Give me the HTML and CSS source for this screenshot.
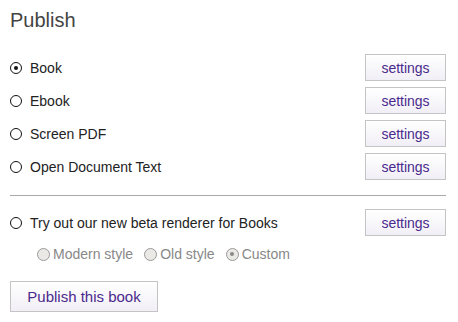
FILE: index.html
```html
<!DOCTYPE html>
<html>
<head>
<meta charset="utf-8">
<link rel="stylesheet" href="styles.css">
</head>
<body>
<div class="panel">
  <h1 class="title">Publish</h1>
  <div class="options">
    <div class="row">
      <label class="opt"><span class="radio checked"></span>Book</label>
      <button class="btn">settings</button>
    </div>
    <div class="row">
      <label class="opt"><span class="radio"></span>Ebook</label>
      <button class="btn">settings</button>
    </div>
    <div class="row">
      <label class="opt"><span class="radio"></span>Screen PDF</label>
      <button class="btn">settings</button>
    </div>
    <div class="row">
      <label class="opt"><span class="radio"></span>Open Document Text</label>
      <button class="btn">settings</button>
    </div>
  </div>
  <hr class="sep">
  <div class="row">
    <label class="opt"><span class="radio"></span>Try out our new beta renderer for Books</label>
    <button class="btn">settings</button>
  </div>
  <div class="sub">
    <label class="subopt"><span class="radio dis"></span>Modern style</label>
    <label class="subopt"><span class="radio dis"></span>Old style</label>
    <label class="subopt"><span class="radio dis checked"></span>Custom</label>
  </div>
  <button class="btn big">Publish this book</button>
</div>
</body>
</html>
```
FILE: styles.css
```css
html, body {
  margin: 0;
  padding: 0;
  background: #fff;
}
body {
  font-family: "Liberation Sans", Arial, sans-serif;
  color: #222;
  font-size: 14px;
}
.panel {
  padding: 6px 12px 10px 10px;
}
.title {
  font-size: 20px;
  font-weight: normal;
  color: #444;
  margin: 0 0 20px 0;
  line-height: 28px;
}
.options {
  display: flex;
  flex-direction: column;
}
.row {
  display: flex;
  justify-content: space-between;
  align-items: center;
  height: 27px;
  margin-bottom: 6px;
}
.opt {
  display: flex;
  align-items: center;
  gap: 8px;
}
.radio {
  width: 10px;
  height: 10px;
  border: 1.5px solid #111;
  border-radius: 50%;
  display: inline-flex;
  align-items: center;
  justify-content: center;
  box-sizing: content-box;
}
.radio.checked::after {
  content: "";
  width: 4px;
  height: 4px;
  border-radius: 50%;
  background: #111;
}
.radio.dis {
  border: 1px solid #999;
  background: #ebe9e6;
  width: 11px;
  height: 11px;
}
.radio.dis.checked::after {
  background: #888;
}
.btn {
  font-family: "Liberation Sans", Arial, sans-serif;
  font-size: 14px;
  color: #4a2a8c;
  border: 1px solid #c4c4c4;
  background: linear-gradient(#fff, #f1eff6);
  width: 81px;
  height: 27px;
  padding: 0;
}
.sep {
  border: none;
  border-top: 1px solid #aaa;
  margin: 9px 0 13px 0;
}
.sub {
  display: flex;
  gap: 11px;
  padding-left: 27px;
  margin-top: 3px;
  color: #888;
  height: 24px;
  align-items: center;
  font-size: 14px;
}
.subopt {
  display: flex;
  align-items: center;
  gap: 3px;
}
.btn.big {
  width: 148px;
  height: 31px;
  margin-top: 15px;
  font-size: 15px;
}
```
